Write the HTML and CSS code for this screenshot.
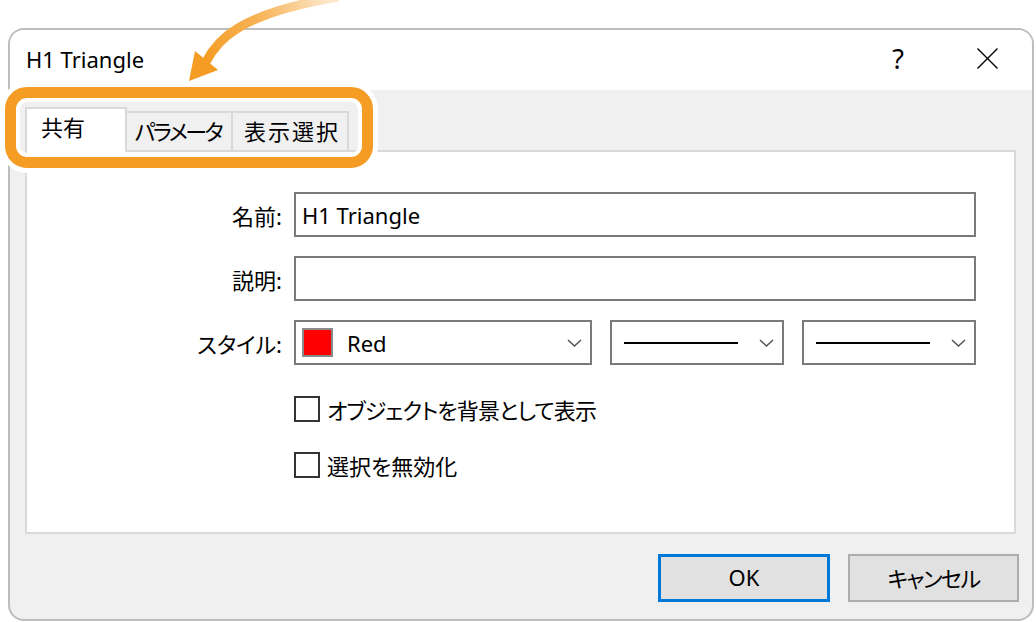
FILE: index.html
```
<!DOCTYPE html>
<html>
<head>
	<title>H1 Triangle</title>
	<link rel="stylesheet" href="styles.css">
</head>
<body>

	<div class="dialog">
		<div class="titlebar">
			<span class="title">H1 Triangle</span>
			<span class="help">?</span>
			<span class="close">
				<svg width="21" height="21" viewBox="0 0 21 21"><path d="M0.5 0.5 L20.5 20.5 M20.5 0.5 L0.5 20.5" stroke="#000" stroke-width="1.4" fill="none"/></svg>
			</span>
		</div>

		<div class="body">
			<div class="tabs">
				<div class="tab active">共有</div>
				<div class="tab tab_param">パラメータ</div>
				<div class="tab tab_view">表示選択</div>
			</div>

			<div class="panel">
				<div class="form">
					<div class="label">名前:</div>
					<div class="field">H1 Triangle</div>

					<div class="label">説明:</div>
					<div class="field"></div>

					<div class="label">スタイル:</div>
					<div class="combos">
						<div class="combo combo_color">
							<span class="swatch"></span>
							<span class="combo_text">Red</span>
							<svg class="chev" width="15" height="8" viewBox="0 0 15 8"><path d="M1 1 L7.5 7 L14 1" stroke="#555" stroke-width="1.5" fill="none"/></svg>
						</div>
						<div class="combo">
							<span class="line"></span>
							<svg class="chev" width="15" height="8" viewBox="0 0 15 8"><path d="M1 1 L7.5 7 L14 1" stroke="#555" stroke-width="1.5" fill="none"/></svg>
						</div>
						<div class="combo">
							<span class="line"></span>
							<svg class="chev" width="15" height="8" viewBox="0 0 15 8"><path d="M1 1 L7.5 7 L14 1" stroke="#555" stroke-width="1.5" fill="none"/></svg>
						</div>
					</div>
				</div>

				<div class="checks">
					<div class="check"><span class="box"></span><span class="kana">オブジェクトを背景として表示</span></div>
					<div class="check"><span class="box"></span>選択を無効化</div>
				</div>
			</div>

			<div class="buttons">
				<div class="btn btn_ok">OK</div>
				<div class="btn btn_cancel">キャンセル</div>
			</div>
		</div>
	</div>

	<!-- callout over the tab strip -->
	<div class="highlight"></div>
	<svg class="arrow" width="340" height="100" viewBox="0 0 340 100">
		<defs>
			<linearGradient id="arrowfade" x1="205" y1="62" x2="330" y2="0" gradientUnits="userSpaceOnUse">
				<stop offset="0" stop-color="#f49c23"/>
				<stop offset="0.5" stop-color="#f7b459"/>
				<stop offset="1" stop-color="#fde8cb"/>
			</linearGradient>
		</defs>
		<path d="M206 62 C 216 42, 236 14, 338 -3" stroke="url(#arrowfade)" stroke-width="9" fill="none"/>
		<polygon points="189,81 195,51 218,70" fill="#f49c23"/>
	</svg>

</body>
</html>
```

FILE: styles.css
```
body {margin: 0; background: #fff; position: relative; color: #000;
		font-family: "Noto Sans", "Noto Sans CJK JP", sans-serif; font-size: 22px; font-feature-settings: "palt";}

.dialog {box-sizing: border-box; width: 1026px; height: 593px; margin: 28px 0 0 8px;
		border: 2px solid #bdbdbd; border-radius: 16px; background: #f0f0f0; overflow: hidden;
		display: flex; flex-direction: column;}

.titlebar {height: 60px; flex: none; background: #fff; display: flex; align-items: center; padding: 0 0 3px 16px; box-sizing: border-box;}
.title {flex: 1;}
.help {font-size: 27px; line-height: 1; margin-right: 73px;}
.close {width: 21px; height: 21px; margin-right: 34px; display: flex;}

.body {flex: 1; padding: 17px 16px 0 15px; display: flex; flex-direction: column;}

.tabs {height: 43px; display: flex; align-items: flex-end;}
.tab {box-sizing: border-box; height: 39px; border: 2px solid #d9d9d9; border-bottom: none; background: #f0f0f0;
		display: flex; align-items: center; justify-content: center; margin-left: -2px; padding-bottom: 4px;}
.tab.active {width: 102px; height: 45px; margin: 0 0 -2px 0; background: #fff; position: relative; z-index: 1;
		justify-content: flex-start; padding: 0 0 9px 14px;}
.tab_param {width: 108px; letter-spacing: -2.5px; padding-right: 2px;}
.tab_view {width: 118px; letter-spacing: 2px; padding-left: 4px;}

.panel {box-sizing: border-box; height: 384px; border: 2px solid #d9d9d9; background: #fff; padding: 40px 38px 0 0;}

.form {display: grid; grid-template-columns: 255px 1fr; column-gap: 12px; row-gap: 19px;}
.label {text-align: right; align-self: center;}
.field {box-sizing: border-box; height: 45px; border: 2px solid #7a7a7a; padding-left: 6px; display: flex; align-items: center;}

.combos {display: flex; gap: 18px;}
.combo {box-sizing: border-box; width: 174px; height: 45px; border: 2px solid #7a7a7a; display: flex; align-items: center; padding: 0 8px 0 12px;}
.combo_color {width: 298px; padding-left: 6px;}
.swatch {box-sizing: border-box; width: 31px; height: 29px; border: 2px solid #8a8a8a; background: #ff0000;}
.combo_text {margin-left: 14px;}
.line {width: 114px; height: 2px; background: #000;}
.chev {margin-left: auto;}

.checks {margin: 31px 0 0 267px; display: flex; flex-direction: column; gap: 30px;}
.check {display: flex; align-items: center; gap: 7px; height: 26px;}
.kana {letter-spacing: -0.9px;}
.box {box-sizing: border-box; width: 26px; height: 26px; border: 2px solid #333; background: #fff;}

.buttons {display: flex; justify-content: flex-end; gap: 18px; padding-top: 20px; margin-right: -3px;}
.btn {box-sizing: border-box; width: 171px; height: 48px; border: 2px solid #adadad; background: #e1e1e1;
		display: flex; align-items: center; justify-content: center; padding-bottom: 2px;}
.btn_ok {width: 172px; border: 3px solid #0078d7;}
.btn_cancel {letter-spacing: -1.5px;}

.highlight {position: absolute; left: 5px; top: 87px; width: 368px; height: 81px; box-sizing: border-box;
		border: 11px solid #f49c23; border-radius: 22px;
		box-shadow: inset 0 0 0 4px #fff, 0 0 0 5px #fff;}
.arrow {position: absolute; left: 0; top: 0; overflow: visible;}
```
